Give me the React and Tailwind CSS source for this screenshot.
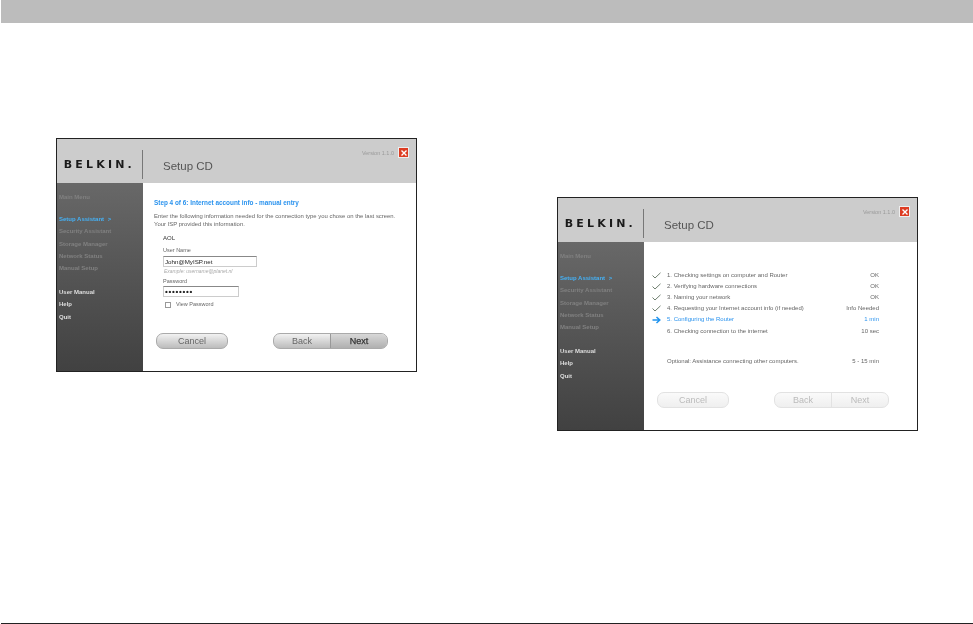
import React from "react";

const DIM_LINKS = ["Security Assistant", "Storage Manager", "Network Status", "Manual Setup"];
const HELP_LINKS = ["User Manual", "Help", "Quit"];

const STEPS = [
  { text: "1. Checking settings on computer and Router", value: "OK", state: "done" },
  { text: "2. Verifying hardware connections", value: "OK", state: "done" },
  { text: "3. Naming your network", value: "OK", state: "done" },
  { text: "4. Requesting your Internet account info (if needed)", value: "Info Needed", state: "done" },
  { text: "5. Configuring the Router", value: "1 min", state: "active" },
  { text: "6. Checking connection to the internet", value: "10 sec", state: "todo" },
];

const Sidebar = () => (
  <div className="w-[86px] shrink-0 bg-gradient-to-b from-[#686868] to-[#414141] pl-[2px] pt-[8px] text-[6px] font-bold leading-[12.2px]">
    <div className="text-[#808080]">Main Menu</div>
    <div className="mt-[10px] text-[#45b1f5]">
      Setup Assistant <span className="ml-[2px]">&gt;</span>
    </div>
    {DIM_LINKS.map((l) => (
      <div key={l} className="text-[#808080]">
        {l}
      </div>
    ))}
    <div className="mt-[12px]">
      {HELP_LINKS.map((l) => (
        <div key={l} className="text-[#dedede]">
          {l}
        </div>
      ))}
    </div>
  </div>
);

const Header = () => (
  <div className="flex h-[44px] shrink-0 bg-[#cccccc]">
    <div className="flex w-[85px] items-center justify-end pt-[7px]">
      <span className="mr-[7px] font-['DejaVu_Sans',sans-serif] text-[11px] font-bold leading-none tracking-[3.2px] text-[#1a1a1a]">
        BELKIN.
      </span>
    </div>
    <div className="mt-[11px] h-[29px] w-px bg-[#777777]" />
    <div className="ml-[20px] pt-[20px] text-[11.5px] leading-[14px] text-[#555555]">Setup CD</div>
    <div className="ml-auto mr-[7px] flex items-start pt-[8px]">
      <span className="mt-[3px] text-[5.5px] leading-[7px] text-[#9a9a9a]">Version 1.1.0</span>
      <span className="ml-[4px] flex h-[11px] w-[11px] items-center justify-center border border-[#eeeeee] bg-[#dd3c22]">
        <svg width="8" height="8" viewBox="0 0 8 8">
          <path d="M1.5 1.5L6.5 6.5M6.5 1.5L1.5 6.5" stroke="#ffffff" strokeWidth="1.4" />
        </svg>
      </span>
    </div>
  </div>
);

const Buttons = ({ disabled }) => {
  const shell = disabled
    ? "border-[#e2e2e2] from-[#fafafa] to-[#efefef] text-[#bbbbbb]"
    : "border-[#aaaaaa] from-[#f2f2f2] to-[#bcbcbc] text-[#666666]";
  return (
    <div className="mt-auto mb-[22px] flex pl-[13px] text-[9px] leading-none">
      <div className={`flex h-[16px] w-[72px] items-center justify-center rounded-[7px] border bg-gradient-to-b ${shell}`}>
        Cancel
      </div>
      <div className={`ml-[45px] flex h-[16px] w-[115px] overflow-hidden rounded-[7px] border bg-gradient-to-b ${shell}`}>
        <div className={`flex w-[57px] items-center justify-center border-r ${disabled ? "border-[#e2e2e2]" : "border-[#999999]"}`}>
          Back
        </div>
        <div
          className={`flex flex-1 items-center justify-center ${
            disabled ? "" : "bg-gradient-to-b from-[#d8d8d8] to-[#b0b0b0] text-[#333333] [-webkit-text-stroke:0.25px_#333333]"
          }`}
        >
          Next
        </div>
      </div>
    </div>
  );
};

const Window = ({ className, children, disabled }) => (
  <div className={`flex h-[234px] w-[361px] shrink-0 flex-col border border-[#222222] bg-white blur-[0.4px] ${className}`}>
    <Header />
    <div className="flex min-h-0 flex-1">
      <Sidebar />
      <div className="flex min-w-0 flex-1 flex-col">
        {children}
        <Buttons disabled={disabled} />
      </div>
    </div>
  </div>
);

const ManualEntry = () => (
  <div className="pl-[11px] pt-[16px] text-[5.5px] text-[#666666]">
    <div className="text-[6.4px] font-bold leading-[8px] text-[#2b93ee]">Step 4 of 6: Internet account info - manual entry</div>
    <div className="mt-[5px] text-[5.93px] leading-[8px]">
      Enter the following information needed for the connection type you chose on the last screen.
      <br />
      Your ISP provided this information.
    </div>
    <div className="ml-[9px]">
      <div className="mt-[6px] text-[6px] leading-[8px] text-[#333333]">AOL</div>
      <div className="mt-[4px] leading-[8px]">User Name</div>
      <div className="mt-[2px] h-[11px] w-[94px] border border-[#cccccc] border-t-[#888888] pl-[1px] text-[6.2px] leading-[10px] text-[#222222]">
        John@MyISP.net
      </div>
      <div className="ml-[1px] mt-[1px] text-[5px] italic leading-[7px] text-[#aaaaaa]">Example: username@planet.nl</div>
      <div className="mt-[2px] leading-[8px]">Password</div>
      <div className="mt-[1px] h-[11px] w-[76px] border border-[#cccccc] border-t-[#888888] pl-[1px] text-[8px] font-bold leading-[9px] tracking-[0.7px] text-[#222222]">
        ••••••••
      </div>
      <div className="mt-[4px] flex items-center pl-[2px]">
        <span className="h-[6px] w-[6px] border border-[#999999]" />
        <span className="ml-[5px] leading-[7px]">View Password</span>
      </div>
    </div>
  </div>
);

const StepIcon = ({ state }) => {
  if (state === "done") {
    return (
      <svg width="9" height="7" viewBox="0 0 9 7" className="shrink-0">
        <path d="M0.5 3.5L3 6L8.5 0.8" fill="none" stroke="#6f7f6f" strokeWidth="1" />
      </svg>
    );
  }
  if (state === "active") {
    return (
      <svg width="9" height="8" viewBox="0 0 9 8" className="shrink-0">
        <path d="M0.5 4H7M4.5 1L7.8 4L4.5 7" fill="none" stroke="#1f93ee" strokeWidth="1.5" />
      </svg>
    );
  }
  return <span className="w-[9px] shrink-0" />;
};

const Checklist = () => (
  <div className="pl-[8px] pr-[38px] pt-[28px] text-[6px] text-[#666666]">
    {STEPS.map((s) => (
      <div key={s.text} className={`flex h-[11.1px] items-center ${s.state === "active" ? "text-[#2b93ee]" : ""}`}>
        <StepIcon state={s.state} />
        <span className="ml-[6px]">{s.text}</span>
        <span className="ml-auto">{s.value}</span>
      </div>
    ))}
    <div className="mt-[19px] flex h-[11px] items-center pl-[15px]">
      <span>Optional: Assistance connecting other computers.</span>
      <span className="ml-auto">5 - 15 min</span>
    </div>
  </div>
);

export default function App() {
  return (
    <div className="flex h-[624px] flex-col pl-px font-['Liberation_Sans',Arial,sans-serif]">
      <div className="h-[23px] shrink-0 bg-[#bcbcbc]" />
      <div className="flex flex-1 items-start">
        <Window className="ml-[55px] mt-[115px]">
          <ManualEntry />
        </Window>
        <Window className="ml-[140px] mt-[174px]" disabled>
          <Checklist />
        </Window>
      </div>
      <div className="h-px shrink-0 bg-[#222222]" />
    </div>
  );
}
